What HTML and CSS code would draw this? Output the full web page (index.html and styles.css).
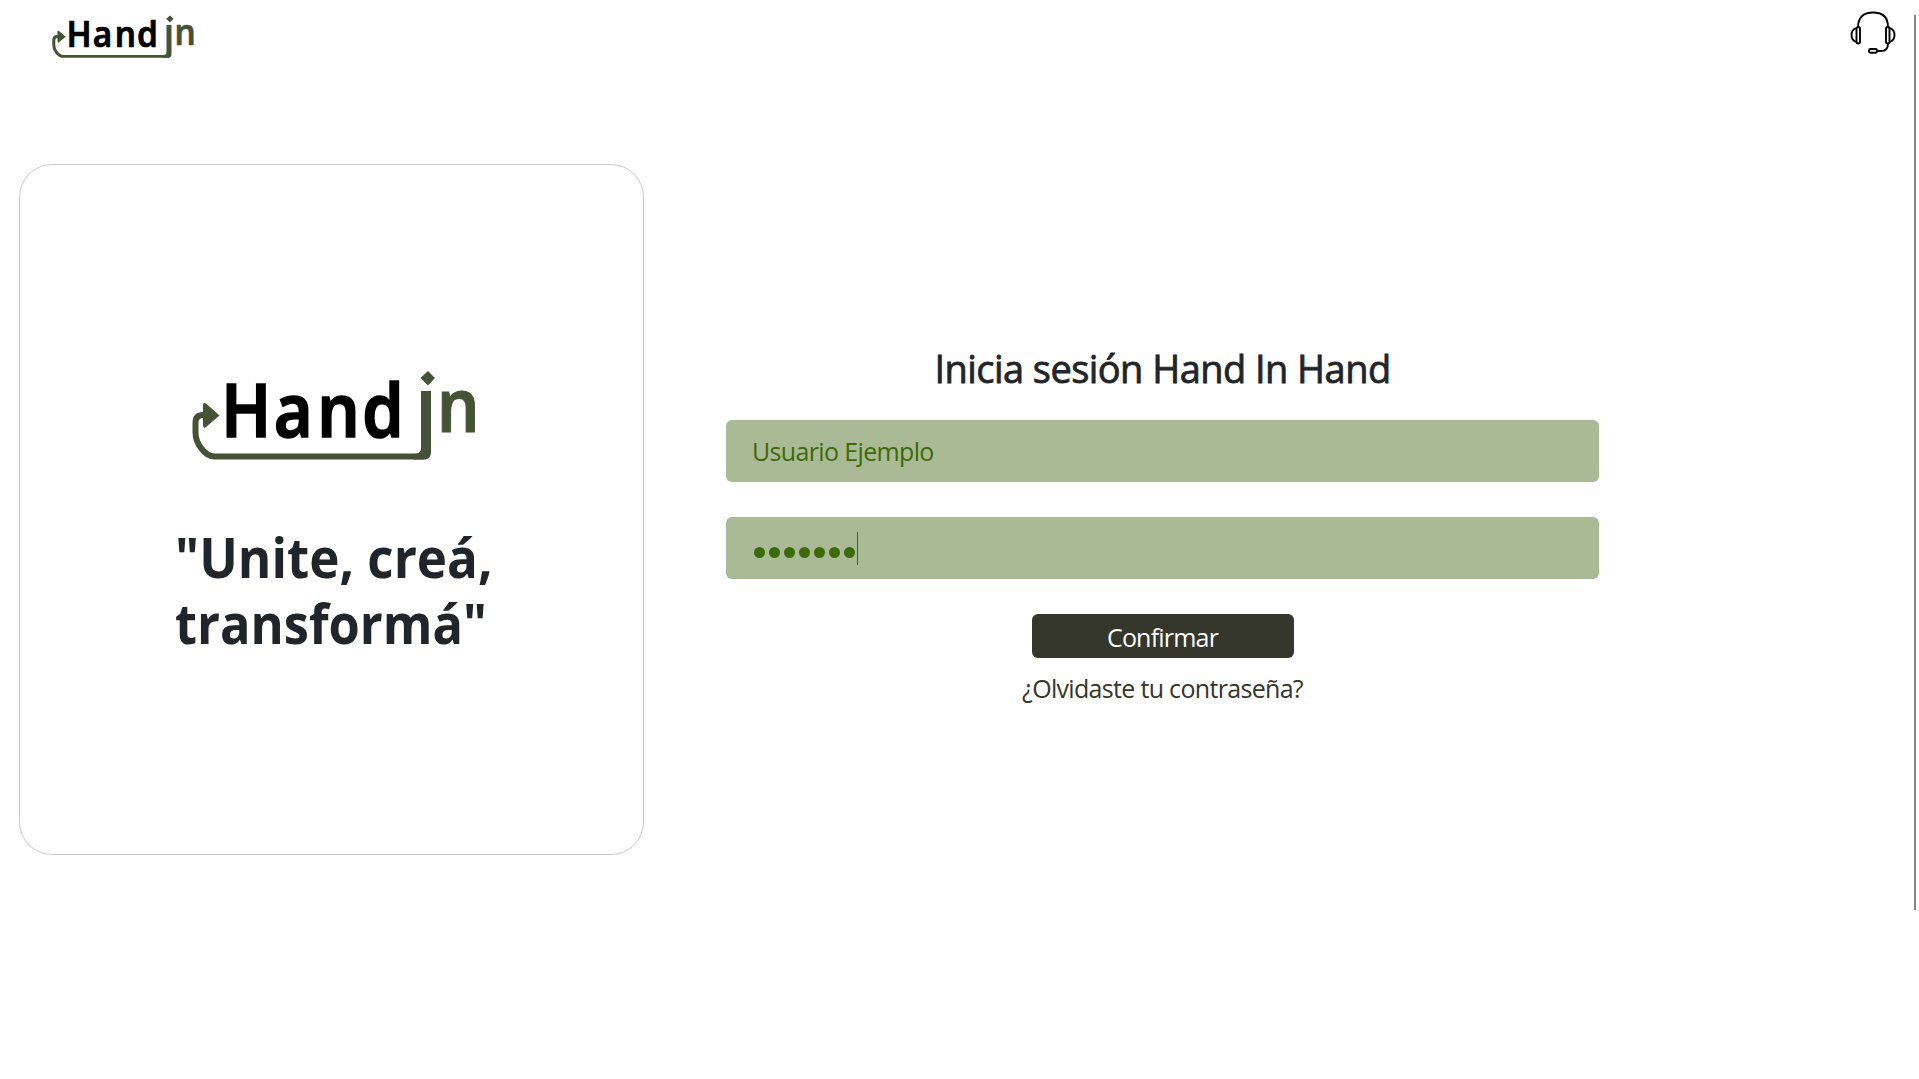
FILE: index.html
```html
<!DOCTYPE html>
<html lang="es">
<head>
<meta charset="utf-8">
<title>Hand In Hand</title>
<link rel="stylesheet" href="styles.css">
</head>
<body>
<svg class="defs" aria-hidden="true">
  <symbol id="logo" viewBox="0 0 288 94" preserveAspectRatio="none">
    <path class="logo-line" d="M15 47H13Q5.500 47 5.500 55V64Q5.500 73 11 80Q17 88.500 25 88.500H233Q236.500 88.500 236.500 85"/>
    <path class="logo-fill" d="M13 37Q13 34 16 35.500L29.500 47.500L16 59Q13 61 13 57ZM231 23H241V84Q241 91.500 234 91.500H223V86Q231 86 231 80ZM238 3L245 10L238 17.500L230.500 10Z"/>
    <g transform="scale(.9 1)">
      <text class="logo-hand" x="34.500 93 141.500 191" y="69">Hand</text>
      <text class="logo-n" x="274.500" y="64">n</text>
    </g>
  </symbol>
</svg>
<header class="topbar">
  <svg class="logo-small" role="img" aria-label="Hand in"><use href="#logo"/></svg>
  <svg class="headset" viewBox="0 0 46 44" aria-label="Soporte">
    <path d="M8 17C8 7 14 2.500 23 2.500S38 7 38 17M38 34C38 39 35 41 31 41H27"/>
    <rect x="6.500" y="17" width="3.500" height="16.500" rx="1.700"/>
    <rect x="36" y="17" width="3.500" height="16.500" rx="1.700"/>
    <path d="M6 18Q1.500 20 1.500 25T6 32M40 18Q44.500 20 44.500 25T40 32"/>
    <rect x="19" y="39" width="8" height="3.800" rx="1.500"/>
  </svg>
</header>
<main class="content">
  <section class="card">
    <svg class="logo-large" role="img" aria-label="Hand in"><use href="#logo"/></svg>
    <h1 class="slogan"><span class="line-one">"Unite, creá,</span><span class="line-two">transformá"</span></h1>
  </section>
  <form class="login">
    <h2 class="title">Inicia sesión Hand In Hand</h2>
    <div class="field"><span class="user">Usuario Ejemplo</span></div>
    <div class="field password"><i class="dot"></i><i class="dot"></i><i class="dot"></i><i class="dot"></i><i class="dot"></i><i class="dot"></i><i class="dot"></i><i class="caret"></i></div>
    <button class="confirm" type="button">Confirmar</button>
    <a class="forgot">¿Olvidaste tu contraseña?</a>
  </form>
</main>
<div class="scrollbar"></div>
</body>
</html>
```
FILE: styles.css
```css
* { box-sizing: border-box; }
body {
  margin: 0;
  height: 1079px;
  overflow: hidden;
  background: #fefefe;
  color: #212529;
  font-family: "Open Sans", "Noto Sans", sans-serif;
}
.defs { position: absolute; width: 0; height: 0; }
.topbar {
  display: flex;
  justify-content: space-between;
  align-items: flex-start;
  height: 164px;
  padding: 10px 23px 0 51px;
}
.logo-small { width: 144px; height: 45px; margin-top: 4px; overflow: visible; }
.logo-large { flex: none; width: 288px; height: 94px; margin-left: 14px; overflow: visible; }
#logo { overflow: visible; }
.logo-line { fill: none; stroke: #465235; stroke-width: 6; }
.logo-fill { fill: #465235; }
.logo-hand, .logo-n { font-family: "Noto Sans", sans-serif; font-size: 74px; font-weight: 600; }
.logo-hand { stroke: #000; stroke-width: 1.5; }
.logo-n { fill: #465235; stroke: #465235; stroke-width: 1; }
.headset { width: 46px; height: 44px; fill: none; stroke: #000; stroke-width: 1.9; }
.content { display: flex; align-items: flex-start; padding-left: 19px; }
.card {
  display: flex;
  flex-direction: column;
  align-items: flex-start;
  width: 625px;
  height: 691px;
  padding: 203px 0 0 156px;
  border: 1px solid #ccc;
  border-radius: 33px;
}
.slogan { display: flex; flex-direction: column; align-items: flex-start; margin: 62px 0 0 -1px; font-size: 55px; line-height: 66px; font-weight: 700; white-space: nowrap; }
.line-one { transform: scaleX(0.93); transform-origin: left; }
.line-two { transform: scaleX(0.92); transform-origin: left; }
.login {
  display: flex;
  flex-direction: column;
  align-items: center;
  width: 873px;
  margin: 180px 0 0 82px;
}
.title {
  margin: 0 0 28px;
  font-size: 38px;
  line-height: 48px;
  font-weight: 500;
  letter-spacing: -0.55px;
  -webkit-text-stroke: 0.8px currentColor;
  white-space: nowrap;
}
.field {
  display: flex;
  align-items: center;
  width: 100%;
  height: 62px;
  margin-bottom: 35px;
  padding: 0 26px;
  border-radius: 6px;
  background: #abba96;
  color: #3c6a08;
  font-size: 25px;
}
.user { letter-spacing: -0.65px; }
.password { gap: 4px; padding-left: 28px; }
.dot { width: 11px; height: 11px; margin-top: 9px; border-radius: 50%; background: currentColor; }
.caret { width: 1px; height: 33px; margin-left: -2px; background: currentColor; }
.confirm {
  width: 262px;
  height: 44px;
  padding: 2px 0 0;
  border: 0;
  border-radius: 6px;
  background: #35362c;
  color: #fff;
  font-family: inherit;
  font-size: 25px;
  line-height: 36px;
  letter-spacing: -0.8px;
}
.forgot { margin-top: 12px; color: #35362c; font-size: 25px; line-height: 36px; letter-spacing: -0.68px; white-space: nowrap; }
.scrollbar { position: absolute; left: 1914px; top: 15px; width: 2px; height: 895px; background: #858585; }
```
